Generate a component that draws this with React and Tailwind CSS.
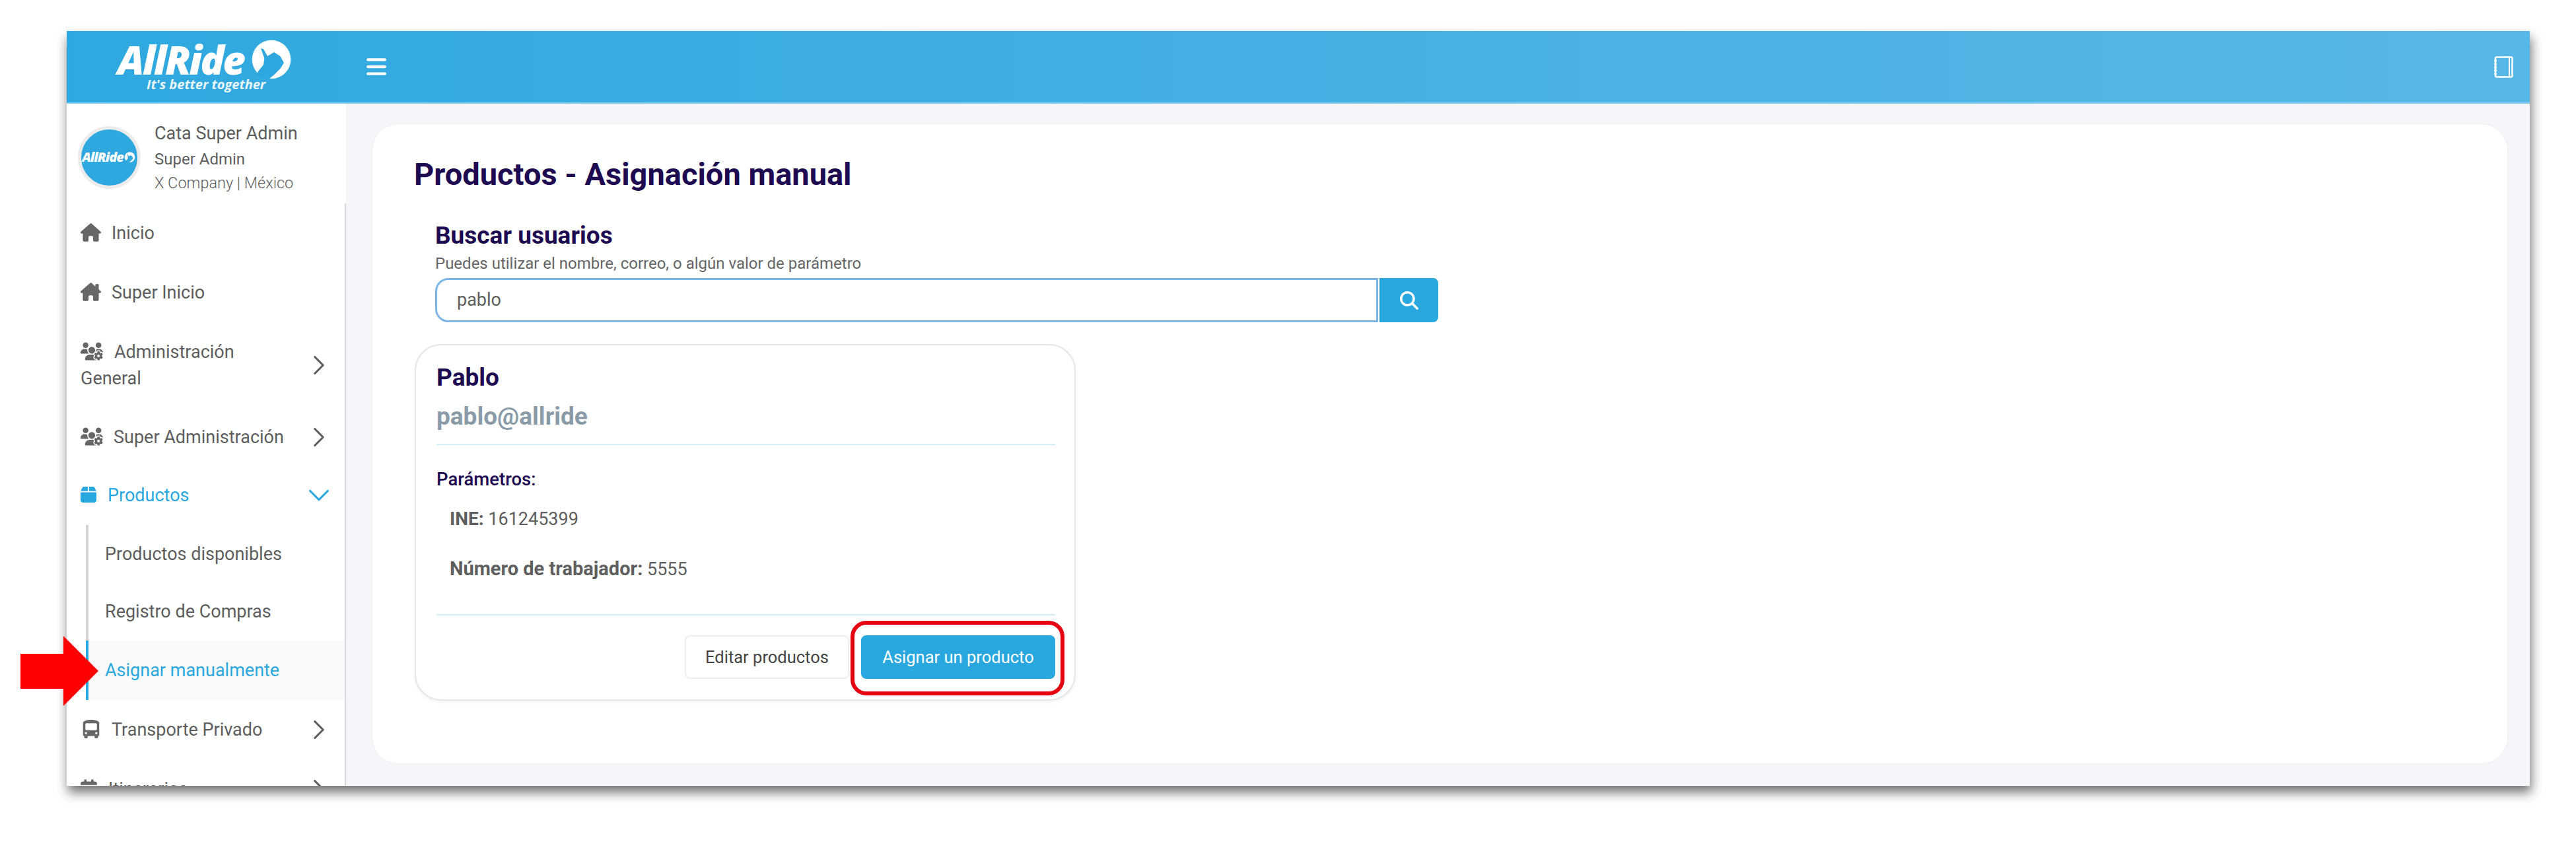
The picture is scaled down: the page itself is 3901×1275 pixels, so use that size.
import React from 'react';
import { FaHouse, FaHouseChimney, FaUsersGear, FaBox, FaBusSimple, FaCalendarDays, FaMagnifyingGlass, FaBars } from 'react-icons/fa6';
import { ChevronRight, ChevronDown } from 'lucide-react';

function ThumbLogo({ className }) {
  return (
    <svg viewBox="0 0 225 210" className={className}>
      <circle cx="108" cy="105" r="88" fill="#ffffff" />
      <path
        d="M60 55 L72 58 L90 90 L120 72 L148 90 L165 120 L150 145 L125 170 L95 196 L40 180 L48 158 L72 130 L76 100 Z"
        fill="#2ea8df"
      />
    </svg>
  );
}

function NotebookIcon() {
  return (
    <svg viewBox="0 0 29 33" className="w-[29px] h-[33px]" fill="none" stroke="#ffffff">
      <rect x="2" y="1.5" width="25.5" height="30" rx="2" strokeWidth="2.5" />
      <line x1="23" y1="2" x2="23" y2="31" strokeWidth="2" />
      <g fill="#ffffff" stroke="none">
        <circle cx="2" cy="7" r="2" />
        <circle cx="2" cy="12" r="2" />
        <circle cx="2" cy="17" r="2" />
        <circle cx="2" cy="22" r="2" />
        <circle cx="2" cy="27" r="2" />
      </g>
    </svg>
  );
}

function NavItem({ icon: Icon, iconClass, label, hasArrow = true, open = false, tall = false, height = 'h-[90px]' }) {
  return (
    <div className={`flex items-center justify-between pl-[21px] pr-[30px] ${height} text-[27px] leading-[40px] ${open ? 'text-[#29a8df]' : 'text-[#5e5e5e]'}`}>
      <span className={tall ? 'w-[300px]' : ''}>
        <Icon className={`inline align-[-4px] ${iconClass}`} />
        {label}
      </span>
      {hasArrow && (open
        ? <ChevronDown className="w-[54px] h-[54px] -mr-[18px] text-[#29a8df] shrink-0" strokeWidth={1.4} />
        : <ChevronRight className="w-[50px] h-[50px] -mr-[16px] text-[#5e5e5e] shrink-0" strokeWidth={1.5} />)}
    </div>
  );
}

function SubItem({ label, active = false, height }) {
  return (
    <div className={`flex items-center ml-[29px] pl-[25px] border-l-[4px] ${height} text-[27px] ${active ? 'border-[#29a8df] bg-[#fafafa] text-[#29a8df]' : 'border-[#d5d5d8] text-[#5e5e5e]'}`}>
      {label}
    </div>
  );
}

export default function App() {
  return (
    <div className="relative h-[1275px] w-full overflow-hidden bg-white pt-[47px] pl-[101px] font-['Roboto',sans-serif]">
      <div className="flex flex-col w-[3730px] h-[1143px] bg-[#f5f6fa] shadow-[2px_10px_16px_rgba(0,0,0,0.55)]">
        {/* Header */}
        <header className="flex items-center h-[110px] shrink-0 pr-[25px] bg-gradient-to-r from-[#2ea8df] to-[#57b7e6] border-b-2 border-[#7fcbee]">
          <div className="relative w-[423px] h-full shrink-0">
            <div className="absolute left-[77px] top-[8px] flex items-center">
              <span className="w-[197px] font-['Open_Sans',sans-serif] font-extrabold italic text-white text-[60px] leading-[46px] tracking-[-2.5px]">AllRide</span>
              <ThumbLogo className="w-[75px] h-[70px]" />
            </div>
            <span className="absolute left-[121px] top-[69px] font-['Open_Sans',sans-serif] font-bold italic text-[#eaf7fd] text-[20px] leading-[24px] whitespace-nowrap">It's better together</span>
          </div>
          <FaBars className="ml-[29px] w-[34px] h-[34px] text-white" />
          <div className="ml-auto">
            <NotebookIcon />
          </div>
        </header>

        <div className="flex flex-1 min-h-0">
          {/* Sidebar */}
          <aside className="flex flex-col w-[423px] shrink-0 bg-white overflow-hidden">
            <div className="flex items-center gap-[21px] h-[151px] shrink-0 pl-[17px] pt-[11px]">
              <div className="flex items-center justify-center w-[95px] h-[95px] rounded-full bg-[#2ea8df] border-[5px] border-[#ececec] shrink-0">
                <span className="font-['Open_Sans',sans-serif] font-extrabold italic text-white text-[20px] leading-none tracking-[-1px]">AllRide</span>
                <ThumbLogo className="w-[20px] h-[20px]" />
              </div>
              <div className="flex flex-col text-[#5e5e5e]">
                <span className="text-[27px] leading-[41px]">Cata Super Admin</span>
                <span className="text-[24px] leading-[36px]">Super Admin</span>
                <span className="text-[23.5px] leading-[36px] font-light">X Company | México</span>
              </div>
            </div>
            <nav className="flex-1 border-r-2 border-[#d8d8dc] overflow-hidden">
              <NavItem icon={FaHouse} iconClass="w-[31px] h-[28px] mr-[16px] text-[#666666]" label="Inicio" hasArrow={false} />
              <NavItem icon={FaHouseChimney} iconClass="w-[31px] h-[28px] mr-[16px] text-[#666666]" label="Super Inicio" hasArrow={false} />
              <NavItem icon={FaUsersGear} iconClass="w-[34px] h-[28px] mr-[17px] text-[#666666]" label="Administración General" tall height="h-[130px]" />
              <NavItem icon={FaUsersGear} iconClass="w-[34px] h-[28px] mr-[16px] text-[#666666]" label="Super Administración" height="h-[87px]" />
              <NavItem icon={FaBox} iconClass="w-[24px] h-[28px] mr-[17px]" label="Productos" open />
              <SubItem label="Productos disponibles" height="h-[88px]" />
              <SubItem label="Registro de Compras" height="h-[87px]" />
              <SubItem label="Asignar manualmente" active height="h-[90px]" />
              <NavItem icon={FaBusSimple} iconClass="w-[28px] h-[28px] mr-[17px] ml-[2px] text-[#666666]" label="Transporte Privado" />
              <NavItem icon={FaCalendarDays} iconClass="w-[25px] h-[28px] mr-[17px] text-[#666666]" label="Itinerarios" />
            </nav>
          </aside>

          {/* Content */}
          <main className="flex-1 min-w-0 pt-[30px] pr-[33px] pb-[33px] pl-[39px]">
            <div className="h-full rounded-[40px] bg-white border border-[#eeeff3] pt-[48px] pl-[63px]">
              <h1 className="text-[47px] leading-[56px] font-bold text-[#1e0a50]">Productos - Asignación manual</h1>

              <div className="ml-[32px] mt-[44px] w-[1519px]">
                <h2 className="text-[37px] leading-[42px] font-bold text-[#1e0a50]">Buscar usuarios</h2>
                <p className="mt-[6px] text-[24px] leading-[30px] text-[#666666]">Puedes utilizar el nombre, correo, o algún valor de parámetro</p>
                <div className="flex mt-[7px] h-[67px]">
                  <div className="flex items-center flex-1 pl-[30px] rounded-l-[20px] border-[3px] border-[#7db6e4] text-[27px] text-[#5e5e5e]">pablo</div>
                  <button className="flex items-center justify-center w-[89px] ml-[2px] rounded-r-[8px] bg-[#29a8df] text-white">
                    <FaMagnifyingGlass className="w-[28px] h-[28px]" />
                  </button>
                </div>
              </div>

              {/* User card */}
              <div className="relative ml-[1px] mt-[33px] w-[1001px] h-[540px] rounded-[40px] border-2 border-[#e4e6e8] shadow-[0_2px_4px_rgba(0,0,0,0.06)] pt-[28px] pl-[31px] pr-[29px]">
                <div className="text-[37px] leading-[42px] font-bold text-[#1e0a50]">Pablo</div>
                <div className="mt-[16px] text-[37px] leading-[44px] font-bold text-[#8a9ba8]">pablo@allride</div>
                <div className="mt-[19px] h-[2px] bg-[#d0ecf5]" />
                <div className="mt-[36px] text-[27.5px] leading-[32px] font-medium text-[#1e0a50]">Parámetros:</div>
                <div className="mt-[28px] pl-[20px] text-[27px] leading-[32px] text-[#5e5e5e]">
                  <b className="font-bold text-[28px]">INE:</b> 161245399
                </div>
                <div className="mt-[43px] pl-[20px] text-[27px] leading-[32px] text-[#5e5e5e]">
                  <b className="font-bold text-[29px]">Número de trabajador:</b> 5555
                </div>
                <div className="mt-[52px] h-[2px] bg-[#d0ecf5]" />
                <div className="flex justify-end gap-[18px] mt-[30px]">
                  <button className="w-[249px] h-[66px] rounded-[8px] border-2 border-[#eeeeee] text-[25.5px] text-[#444444]">Editar productos</button>
                  <button className="w-[294px] h-[66px] rounded-[8px] bg-[#29a8df] text-[25.5px] text-white">Asignar un producto</button>
                </div>
                {/* Red highlight */}
                <div className="absolute left-[658px] top-[417px] w-[324px] h-[113px] rounded-[24px] border-[6px] border-[#e60012]" />
              </div>
            </div>
          </main>
        </div>
      </div>

      {/* Red arrow */}
      <svg viewBox="0 0 118 106" className="absolute left-[31px] top-[963px] w-[118px] h-[106px]">
        <polygon points="0,27 65,27 65,0 118,53 65,106 65,80 0,80" fill="#ff0000" />
      </svg>
    </div>
  );
}
